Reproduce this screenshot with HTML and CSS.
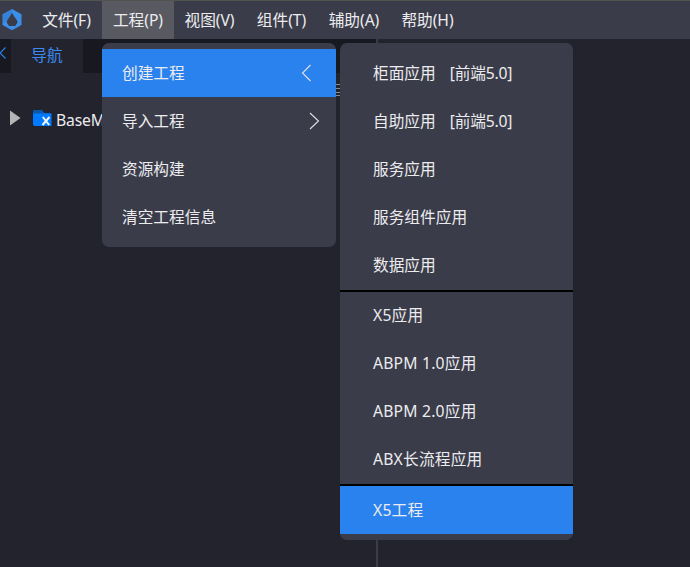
FILE: index.html
```
<!DOCTYPE html>
<html lang="zh-CN">
<head>
<meta charset="utf-8">
<title>工程</title>
<link rel="stylesheet" href="styles.css">
</head>
<body>
<div class="app">
  <header class="menubar">
    <svg class="logo" width="20" height="22" viewBox="0 0 20 22">
      <path fill="#3b8fe8" fill-rule="evenodd" d="M10 0 19.500 5.200V16L10 21.300.5 16V5.200ZM10 3.500C8.500 7.500 4.800 10.500 4.800 13.500L7 17H13.300L15.500 13.500C15.500 10.500 11.500 7.500 10 3.500Z"/>
      <path fill="#2b70c4" d="M10 0 .5 5.200V13L4.800 12.500C5.500 9.500 8.500 7 10 3.500Z" opacity=".4"/>
    </svg>
    <nav class="menus">
      <div class="menu m1"><span>文件(F)</span></div>
      <div class="menu m2 open"><span>工程(P)</span></div>
      <div class="menu m3"><span>视图(V)</span></div>
      <div class="menu m4"><span>组件(T)</span></div>
      <div class="menu m5"><span>辅助(A)</span></div>
      <div class="menu m6"><span>帮助(H)</span></div>
    </nav>
  </header>
  <main class="workspace">
    <section class="sidebar">
      <div class="tabs">
        <svg class="tab-scroll" width="11" height="34" viewBox="0 0 11 34"><path d="M5.500 8.500 0 14l5.500 5.500" fill="none" stroke="#2d7fe6" stroke-width="1.200"/></svg>
        <div class="tab">导航</div>
      </div>
      <div class="toolbar">
        <svg width="14" height="14" viewBox="0 0 14 14"><path d="M0 1.500h14M0 5.500h14M0 9.500h14M0 12.500h14" stroke="#8c8c90"/></svg>
      </div>
      <div class="tree-row">
        <svg class="expander" width="11" height="16" viewBox="0 0 11 16"><path d="M0 .5 10.500 8 0 15.500Z" fill="#b5b5b7"/></svg>
        <svg class="folder" width="19" height="17" viewBox="0 0 19 17">
          <path d="M1 0h8l2.500 3H18v5H0V1Z" fill="#0859ae"/>
          <path d="M0 3.500h18.500V16H1.500L0 14.500Z" fill="#007bff"/>
          <path d="m9.800 7 6.400 8M16.500 7 9.500 15" stroke="#f2f6fc" stroke-width="2"/>
        </svg>
        <span class="tree-label">BaseM</span>
      </div>
    </section>
    <section class="editor"></section>
  </main>
  <div class="popup project-menu">
    <div class="item active">创建工程<svg class="arrow left" width="11" height="18" viewBox="0 0 11 18"><path d="M9.500 1 1.500 9l8 8"/></svg></div>
    <div class="item">导入工程<svg class="arrow" width="11" height="18" viewBox="0 0 11 18"><path d="m1 1 8.500 8L1 17"/></svg></div>
    <div class="item">资源构建</div>
    <div class="item">清空工程信息</div>
  </div>
  <div class="popup create-menu">
    <div class="item">柜面应用<span class="tag">[前端5.0]</span></div>
    <div class="item">自助应用<span class="tag">[前端5.0]</span></div>
    <div class="item">服务应用</div>
    <div class="item">服务组件应用</div>
    <div class="item">数据应用</div>
    <div class="separator first"></div>
    <div class="item raised">X5应用</div>
    <div class="item raised">ABPM 1.0应用</div>
    <div class="item raised">ABPM 2.0应用</div>
    <div class="item raised">ABX长流程应用</div>
    <div class="separator"></div>
    <div class="item latin active">X5工程</div>
  </div>
</div>
</body>
</html>
```
FILE: styles.css
```
* { box-sizing: border-box; }
body {
  margin: 0;
  background: #23232d;
  color: #ececee;
  font: 15.7px/24px "Noto Sans", "Noto Sans CJK SC", sans-serif;
  overflow: hidden;
}
svg { display: block; flex: none; }
.app {
  position: relative;
  width: 690px;
  height: 567px;
  display: flex;
  flex-direction: column;
  overflow: hidden;
  white-space: nowrap;
}
.menubar {
  height: 39px;
  flex: none;
  display: flex;
  align-items: center;
  background: #3b3c4a;
  border-top: 1px solid #52524f;
  padding-left: 2px;
}
.menus { display: flex; height: 100%; margin-left: 8px; }
.menu {
  display: flex;
  align-items: center;
  justify-content: center;
  width: 72px;
  letter-spacing: -.05px;
}
.m1 { width: 70px; margin-right: 2px; }
.m1 span { margin-right: -3px; }
.m3 { width: 71px; }
.m4 { width: 73px; }
.m6 { width: 75px; }
.open { background: #595961; }
.workspace { display: flex; flex: 1; }
.sidebar { width: 378px; border-right: 2px solid #3b3c4a; }
.tabs { display: flex; height: 34px; background: #181820; }
.tab {
  width: 72px;
  background: #23232d;
  color: #3c8af0;
  line-height: 33px;
  text-align: center;
}
.toolbar {
  height: 34px;
  display: flex;
  justify-content: flex-end;
  padding: 10px 32px 0 0;
}
.tree-row {
  height: 24px;
  display: flex;
  align-items: center;
  padding-left: 10px;
}
.expander, .folder { margin-top: -2px; }
.folder { margin-left: 12px; }
.tree-label { margin: 2px 0 0 4px; letter-spacing: -.15px; }
.popup {
  position: absolute;
  top: 43px;
  padding: 6px 0;
  background: #3b3c4a;
  border-radius: 7px;
}
.project-menu { left: 102px; width: 234px; }
.create-menu { left: 340px; width: 233px; }
.item {
  height: 48px;
  display: flex;
  align-items: center;
  padding: 0 16px 0 20px;
}
.create-menu .item { padding-left: 33px; }
.create-menu .raised { padding-bottom: 2px; letter-spacing: .2px; }
.create-menu .latin { letter-spacing: .2px; }
.active { background: #2a82ee; }
.tag { margin-left: 14px; letter-spacing: -.2px; }
.arrow { margin-left: auto; fill: none; stroke: #e0e0e4; stroke-width: 1.1; }
.left { margin-right: 8px; }
.separator { height: 2px; background: #000; }
.first { margin-top: 1px; }
```
